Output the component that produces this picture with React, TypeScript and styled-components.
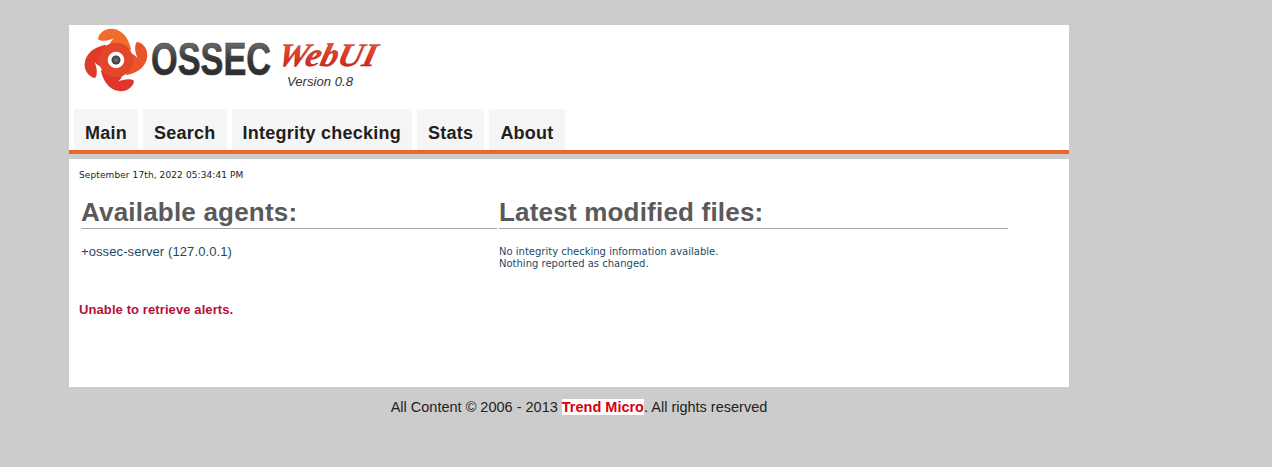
import React from 'react';
import styled, { createGlobalStyle } from 'styled-components';

const GlobalStyle = createGlobalStyle`
  html, body {
    margin: 0;
    padding: 0;
    background: #cccccc;
    font-family: "Liberation Sans", Arial, sans-serif;
  }
`;

const Page = styled.div`
  width: 1000px;
  margin-left: 69px;
  padding-top: 25px;
`;

const Header = styled.header`
  background: #ffffff;
  border-bottom: 4px solid #ec672b;
`;

const LogoArt = styled.svg`
  display: block;
  width: 320px;
  height: 84px;
`;

const Tabs = styled.nav`
  display: flex;
  gap: 5px;
  padding-left: 5px;
`;

const Tab = styled.a`
  display: block;
  height: 41px;
  box-sizing: border-box;
  padding: 14px 11px 0;
  background: #f5f5f5;
  color: #1f1f1f;
  font-size: 18px;
  line-height: 20px;
  font-weight: 700;
  letter-spacing: 0.25px;
  text-decoration: none;
`;

const Content = styled.main`
  height: 228px;
  box-sizing: border-box;
  margin-top: 5px;
  padding: 11px 10px 0;
  background: #ffffff;
`;

const DateLine = styled.div`
  font-family: "DejaVu Sans", Verdana, sans-serif;
  font-size: 9px;
  line-height: 11px;
  letter-spacing: 0.1px;
  color: #222222;
`;

const Columns = styled.div`
  display: grid;
  grid-template-columns: 416px 509px;
  column-gap: 2px;
  margin: 17px 0 0 2px;
`;

const Heading = styled.h2`
  margin: 0 0 16px;
  height: 30px;
  border-bottom: 1px solid #a6a6a6;
  color: #5a5a5a;
  font-size: 26px;
  line-height: 28px;
  font-weight: 700;
  letter-spacing: 0.2px;
`;

const AgentLine = styled.div`
  font-size: 12px;
  line-height: 14px;
`;

const AgentLink = styled.a`
  color: #1c4a66;
  font-size: 13px;
  letter-spacing: 0.1px;
  text-decoration: none;
`;

const Notes = styled.div`
  padding-top: 1px;
  color: #1c4a66;
  font-family: "DejaVu Sans", Verdana, sans-serif;
  font-size: 10px;
  line-height: 12px;
`;

const Alert = styled.div`
  margin-top: 33px;
  color: #b5103c;
  font-size: 13px;
  line-height: 14px;
  font-weight: 700;
  letter-spacing: 0.1px;
`;

const Footer = styled.footer`
  padding: 12px 0 0 20px;
  text-align: center;
  color: #222222;
  font-size: 14.5px;
  line-height: 16px;
`;

const VendorLink = styled.a`
  background: #ffffff;
  border-bottom: 1px dotted #333333;
  color: #d8000c;
  font-weight: 700;
  text-decoration: none;
`;

const blade = 'M-30,-88 C0,-98 34,-80 44,-30 L-10,-30 C-26,-40 -16,-54 -6,-62 C-22,-56 -40,-52 -52,-60 C-52,-72 -42,-82 -30,-88 Z';

const Logo = () => (
  <LogoArt viewBox="69 25 320 84" role="img" aria-label="OSSEC WebUI">
    <defs>
      <linearGradient id="wordmark" x1="0" y1="0" x2="0" y2="1">
        <stop offset="0" stopColor="#8c8c8c" />
        <stop offset="0.55" stopColor="#333333" />
        <stop offset="1" stopColor="#2a2a2a" />
      </linearGradient>
      <linearGradient id="webui" x1="0" y1="0" x2="0" y2="1">
        <stop offset="0" stopColor="#ee5a3c" />
        <stop offset="1" stopColor="#cc1c16" />
      </linearGradient>
      <radialGradient id="pupil">
        <stop offset="0" stopColor="#777777" />
        <stop offset="1" stopColor="#333333" />
      </radialGradient>
    </defs>
    <g transform="translate(116 60) scale(0.345)">
      <path d={blade} fill="#ee6d2a" />
      <path d={blade} fill="#e9552a" transform="rotate(90)" />
      <path d={blade} fill="#e0352a" transform="rotate(180)" />
      <path d={blade} fill="#e23a28" transform="rotate(270)" />
      <circle r="50" fill="#e4462a" />
      <circle r="24" fill="#ffffff" />
      <circle r="13" fill="url(#pupil)" />
    </g>
    <text
      x="151"
      y="75"
      fontFamily="'Liberation Sans', Arial, sans-serif"
      fontWeight="700"
      fontSize="47"
      fill="url(#wordmark)"
      stroke="#3a3a3a"
      strokeWidth="0.7"
      textLength="120"
      lengthAdjust="spacingAndGlyphs"
    >
      OSSEC
    </text>
    <text
      x="276"
      y="66"
      fontFamily="'Liberation Serif', 'Times New Roman', serif"
      fontStyle="italic"
      fontWeight="700"
      fontSize="33"
      fill="url(#webui)"
      stroke="#a81a12"
      strokeWidth="0.4"
      textLength="98"
      lengthAdjust="spacingAndGlyphs"
      transform="skewX(-14) translate(16.5 0)"
    >
      WebUI
    </text>
    <text
      x="287"
      y="86"
      fontFamily="'Liberation Sans', Arial, sans-serif"
      fontStyle="italic"
      fontSize="13"
      fill="#333333"
      textLength="66"
      lengthAdjust="spacingAndGlyphs"
    >
      Version 0.8
    </text>
  </LogoArt>
);

const tabs = ['Main', 'Search', 'Integrity checking', 'Stats', 'About'];

const App = () => (
  <>
    <GlobalStyle />
    <Page>
      <Header>
        <Logo />
        <Tabs>
          {tabs.map((tab) => (
            <Tab href="#" key={tab}>{tab}</Tab>
          ))}
        </Tabs>
      </Header>
      <Content>
        <DateLine>September 17th, 2022 05:34:41 PM</DateLine>
        <Columns>
          <section>
            <Heading>Available agents:</Heading>
            <AgentLine>
              <AgentLink href="#">+ossec-server (127.0.0.1)</AgentLink>
            </AgentLine>
          </section>
          <section>
            <Heading>Latest modified files:</Heading>
            <Notes>
              No integrity checking information available.<br />
              Nothing reported as changed.
            </Notes>
          </section>
        </Columns>
        <Alert>Unable to retrieve alerts.</Alert>
      </Content>
      <Footer>
        All Content © 2006 - 2013 <VendorLink href="#">Trend Micro</VendorLink>. All rights reserved
      </Footer>
    </Page>
  </>
);

export default App;
